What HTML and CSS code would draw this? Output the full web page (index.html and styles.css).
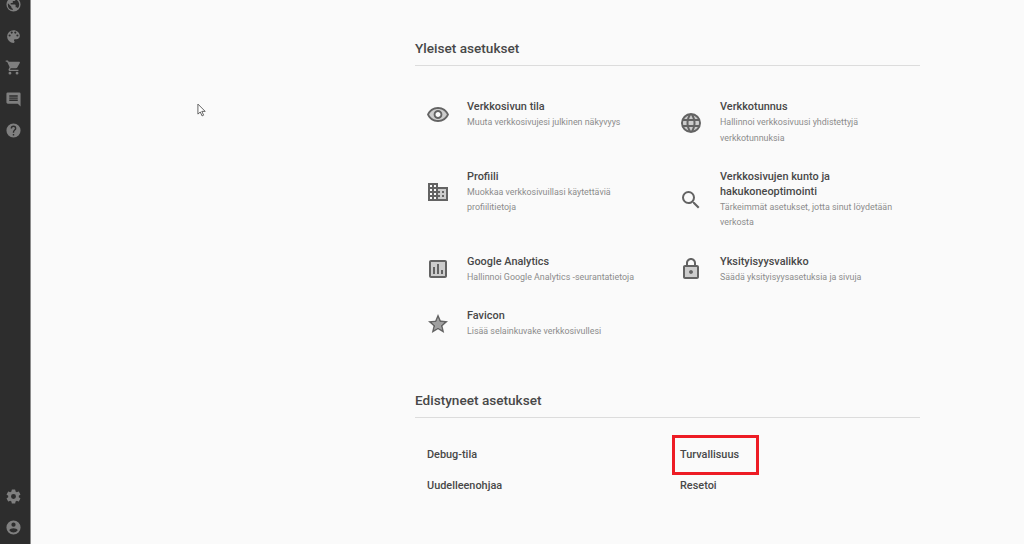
FILE: index.html
```html
<!DOCTYPE html>
<html lang="fi">
<head>
<meta charset="utf-8">
<title>Asetukset</title>
<link rel="stylesheet" href="styles.css">
</head>
<body>
<aside class="rail">
  <div class="rail-group">
    <svg class="rail-icon" viewBox="0 0 24 24"><path d="M12 2a10 10 0 1 0 0 20 10 10 0 0 0 0-20zm-1 17.93A8 8 0 0 1 4 12c0-.62.08-1.21.21-1.79L9 15v1c0 1.1.9 2 2 2v1.93zm6.9-2.54A2 2 0 0 0 16 16h-1v-3c0-.55-.45-1-1-1H8v-2h2c.55 0 1-.45 1-1V7h2c1.1 0 2-.9 2-2v-.41a8 8 0 0 1 2.9 12.8z"/></svg>
    <svg class="rail-icon" viewBox="0 0 24 24"><path d="M12 3a9 9 0 0 0 0 18c.83 0 1.5-.67 1.5-1.5 0-.39-.15-.74-.39-1.01-.23-.26-.38-.61-.38-.99 0-.83.67-1.5 1.5-1.5H16c2.76 0 5-2.24 5-5 0-4.42-4.03-8-9-8zm-5.5 9a1.5 1.5 0 1 1 0-3 1.5 1.5 0 0 1 0 3zm3-4a1.5 1.5 0 1 1 0-3 1.5 1.5 0 0 1 0 3zm5 0a1.5 1.5 0 1 1 0-3 1.5 1.5 0 0 1 0 3zm3 4a1.5 1.5 0 1 1 0-3 1.5 1.5 0 0 1 0 3z"/></svg>
    <svg class="rail-icon" viewBox="0 0 24 24"><path d="M7 18a2 2 0 1 0 0 4 2 2 0 0 0 0-4zM1 2v2h2l3.6 7.59-1.35 2.45c-.16.28-.25.61-.25.96 0 1.1.9 2 2 2h12v-2H7.42a.25.25 0 0 1-.25-.25l.03-.12.9-1.63h7.45c.75 0 1.41-.41 1.75-1.03l3.58-6.49A1 1 0 0 0 20 4H5.21l-.94-2H1zm16 16a2 2 0 1 0 0 4 2 2 0 0 0 0-4z"/></svg>
    <svg class="rail-icon" viewBox="0 0 24 24"><path d="M20 2H4a2 2 0 0 0-2 2v12c0 1.1.9 2 2 2h14l4 4V4a2 2 0 0 0-2-2zm-2 12H6v-2h12v2zm0-3H6V9h12v2zm0-3H6V6h12v2z"/></svg>
    <svg class="rail-icon" viewBox="0 0 24 24"><path d="M12 2a10 10 0 1 0 0 20 10 10 0 0 0 0-20zm1 17h-2v-2h2v2zm2.07-7.75-.9.92C13.45 12.9 13 13.5 13 15h-2v-.5c0-1.1.45-2.1 1.17-2.83l1.24-1.26c.37-.36.59-.86.59-1.41a2 2 0 0 0-4 0H8a4 4 0 0 1 8 0c0 .88-.36 1.68-.93 2.25z"/></svg>
  </div>
  <div class="rail-group">
    <svg class="rail-icon" viewBox="0 0 24 24"><path d="M19.43 12.98c.04-.32.07-.64.07-.98s-.03-.66-.07-.98l2.11-1.65a.5.5 0 0 0 .12-.64l-2-3.46a.5.5 0 0 0-.61-.22l-2.49 1a7.3 7.3 0 0 0-1.69-.98l-.38-2.65A.49.49 0 0 0 14 2h-4a.49.49 0 0 0-.49.42l-.38 2.65c-.61.25-1.17.59-1.69.98l-2.49-1a.5.5 0 0 0-.61.22l-2 3.46a.49.49 0 0 0 .12.64l2.11 1.65c-.04.32-.07.65-.07.98s.03.66.07.98l-2.11 1.65a.5.5 0 0 0-.12.64l2 3.46c.12.22.39.3.61.22l2.49-1c.52.4 1.08.73 1.69.98l.38 2.65c.03.24.24.42.49.42h4c.25 0 .46-.18.49-.42l.38-2.65c.61-.25 1.17-.59 1.69-.98l2.49 1c.23.09.49 0 .61-.22l2-3.46a.5.5 0 0 0-.12-.64l-2.11-1.65zM12 15.5a3.5 3.5 0 1 1 0-7 3.5 3.5 0 0 1 0 7z"/></svg>
    <svg class="rail-icon" viewBox="0 0 24 24"><path d="M12 2a10 10 0 1 0 0 20 10 10 0 0 0 0-20zm0 3a3 3 0 1 1 0 6 3 3 0 0 1 0-6zm0 14.2a7.2 7.2 0 0 1-6-3.22c.03-1.99 4-3.08 6-3.08s5.97 1.09 6 3.08a7.2 7.2 0 0 1-6 3.22z"/></svg>
  </div>
</aside>

<main class="content">
  <section class="general">
    <h2 class="section-title">Yleiset asetukset</h2>
    <div class="settings-grid">
      <a class="item">
        <svg class="item-icon" viewBox="0 0 24 24"><path class="tone" d="M12 6c-3.79 0-7.17 2.13-8.82 5.5C4.83 14.87 8.21 17 12 17s7.17-2.13 8.82-5.5C19.17 8.13 15.79 6 12 6zm0 10c-2.48 0-4.5-2.02-4.5-4.5S9.52 7 12 7s4.5 2.02 4.5 4.5S14.48 16 12 16z"/><path d="M12 4C7 4 2.73 7.11 1 11.5 2.73 15.89 7 19 12 19s9.27-3.11 11-7.5C21.27 7.11 17 4 12 4zm0 13c-3.79 0-7.17-2.13-8.82-5.5C4.83 8.13 8.21 6 12 6s7.17 2.13 8.82 5.5C19.17 14.87 15.79 17 12 17zm0-10c-2.48 0-4.5 2.02-4.5 4.5S9.52 16 12 16s4.5-2.02 4.5-4.5S14.48 7 12 7zm0 7c-1.38 0-2.5-1.12-2.5-2.5S10.62 9 12 9s2.5 1.12 2.5 2.5S13.38 14 12 14z"/></svg>
        <div class="item-text"><h3>Verkkosivun tila</h3><p>Muuta verkkosivujesi julkinen näkyvyys</p></div>
      </a>
      <a class="item">
        <svg class="item-icon" viewBox="0 0 24 24"><circle class="tone" cx="12" cy="12" r="9"/><path d="M11.99 2A10 10 0 1 0 12 22a10 10 0 0 0-.01-20zm6.93 6h-2.95a15.65 15.65 0 0 0-1.38-3.56A8.03 8.03 0 0 1 18.92 8zM12 4.04c.83 1.2 1.48 2.53 1.91 3.96h-3.82c.43-1.43 1.08-2.76 1.91-3.96zM4.26 14A8.26 8.26 0 0 1 4 12c0-.69.1-1.36.26-2h3.38c-.08.66-.14 1.32-.14 2s.06 1.34.14 2H4.26zm.82 2h2.95c.32 1.25.78 2.45 1.38 3.56A7.99 7.99 0 0 1 5.08 16zm2.95-8H5.08a7.99 7.99 0 0 1 4.33-3.56A15.65 15.65 0 0 0 8.03 8zM12 19.96c-.83-1.2-1.48-2.53-1.91-3.96h3.82c-.43 1.43-1.08 2.76-1.91 3.96zM14.34 14H9.66c-.09-.66-.16-1.32-.16-2s.07-1.35.16-2h4.68c.09.65.16 1.32.16 2s-.07 1.34-.16 2zm.25 5.56c.6-1.11 1.06-2.31 1.38-3.56h2.95a8.03 8.03 0 0 1-4.33 3.56zM16.36 14c.08-.66.14-1.32.14-2s-.06-1.34-.14-2h3.38c.16.64.26 1.31.26 2s-.1 1.36-.26 2h-3.38z"/></svg>
        <div class="item-text"><h3>Verkkotunnus</h3><p>Hallinnoi verkkosivuusi yhdistettyjä verkkotunnuksia</p></div>
      </a>
      <a class="item">
        <svg class="item-icon" viewBox="0 0 24 24"><path class="tone" d="M12 11h2v2h-2v2h2v2h-2v2h8V9h-8v2zm4 0h2v2h-2v-2zm0 4h2v2h-2v-2z"/><path d="M12 7V3H2v18h20V7H12zM6 19H4v-2h2v2zm0-4H4v-2h2v2zm0-4H4V9h2v2zm0-4H4V5h2v2zm4 12H8v-2h2v2zm0-4H8v-2h2v2zm0-4H8V9h2v2zm0-4H8V5h2v2zm10 12h-8v-2h2v-2h-2v-2h2v-2h-2V9h8v10zm-2-8h-2v2h2v-2zm0 4h-2v2h2v-2z"/></svg>
        <div class="item-text"><h3>Profiili</h3><p>Muokkaa verkkosivuillasi käytettäviä profiilitietoja</p></div>
      </a>
      <a class="item">
        <svg class="item-icon" viewBox="0 0 24 24"><path d="M15.5 14h-.79l-.28-.27A6.47 6.47 0 0 0 16 9.5 6.5 6.5 0 1 0 9.5 16c1.61 0 3.09-.59 4.23-1.57l.27.28v.79l5 4.99L20.49 19l-4.99-5zm-6 0a4.5 4.5 0 1 1 0-9 4.5 4.5 0 0 1 0 9z"/></svg>
        <div class="item-text"><h3>Verkkosivujen kunto ja hakukoneoptimointi</h3><p>Tärkeimmät asetukset, jotta sinut löydetään verkosta</p></div>
      </a>
      <a class="item">
        <svg class="item-icon" viewBox="0 0 24 24"><path class="tone" d="M5 5v14h14V5H5zm4 12H7v-7h2v7zm4 0h-2V7h2v10zm4 0h-2v-4h2v4z"/><path d="M3 5v14c0 1.1.9 2 2 2h14c1.1 0 2-.9 2-2V5c0-1.1-.9-2-2-2H5c-1.1 0-2 .9-2 2zm2 0h14v14H5V5zm2 5h2v7H7zm4-3h2v10h-2zm4 6h2v4h-2z"/></svg>
        <div class="item-text"><h3>Google Analytics</h3><p>Hallinnoi Google Analytics -seurantatietoja</p></div>
      </a>
      <a class="item">
        <svg class="item-icon" viewBox="0 0 24 24"><path class="tone" d="M6 20h12V10H6v10zm6-7c1.1 0 2 .9 2 2s-.9 2-2 2-2-.9-2-2 .9-2 2-2z"/><path d="M18 8h-1V6c0-2.76-2.24-5-5-5S7 3.24 7 6v2H6c-1.1 0-2 .9-2 2v10c0 1.1.9 2 2 2h12c1.1 0 2-.9 2-2V10c0-1.1-.9-2-2-2zM9 6c0-1.66 1.34-3 3-3s3 1.34 3 3v2H9V6zm9 14H6V10h12v10zm-6-3c1.1 0 2-.9 2-2s-.9-2-2-2-2 .9-2 2 .9 2 2 2z"/></svg>
        <div class="item-text"><h3>Yksityisyysvalikko</h3><p>Säädä yksityisyysasetuksia ja sivuja</p></div>
      </a>
      <a class="item">
        <svg class="item-icon" viewBox="0 0 24 24"><path class="tone-strong" d="M12 15.4l-3.76 2.27 1-4.28-3.32-2.88 4.38-.38L12 6.1l1.71 4.04 4.38.38-3.32 2.88 1 4.28L12 15.4z"/><path d="M22 9.24l-7.19-.62L12 2 9.19 8.63 2 9.24l5.46 4.73L5.82 21 12 17.27 18.18 21l-1.63-7.03L22 9.24zM12 15.4l-3.76 2.27 1-4.28-3.32-2.88 4.38-.38L12 6.1l1.71 4.04 4.38.38-3.32 2.88 1 4.28L12 15.4z"/></svg>
        <div class="item-text"><h3>Favicon</h3><p>Lisää selainkuvake verkkosivullesi</p></div>
      </a>
    </div>
  </section>

  <section class="advanced">
    <h2 class="section-title">Edistyneet asetukset</h2>
    <div class="links-grid">
      <a class="link">Debug-tila</a>
      <a class="link marked">Turvallisuus</a>
      <a class="link">Uudelleenohjaa</a>
      <a class="link">Resetoi</a>
    </div>
  </section>
</main>

<svg class="cursor" viewBox="0 0 11 15"><path d="M1 1v11l2.6-2.3L5.6 14l1.7-.8-2-4.2H9z"/></svg>
</body>
</html>
```
FILE: styles.css
```css
*, *::after { box-sizing: border-box; }
html, body { height: 100%; }
body {
  margin: 0;
  height: 544px;
  overflow: hidden;
  display: flex;
  background: #fafafa;
  font-family: Roboto, "Liberation Sans", sans-serif;
  color: #484848;
}
.rail {
  width: 31px;
  flex: none;
  background: #2d2d2d;
  border-right: 1px solid #8c8c8c;
  display: flex;
  flex-direction: column;
  justify-content: space-between;
  padding: 0 4px 8px 0;
}
.rail-group {
  display: flex;
  flex-direction: column;
  align-items: center;
  gap: 14.5px;
}
.rail-group:first-child { margin-top: -4px; }
.rail-icon { width: 17px; height: 17px; fill: #7f7f7f; display: block; }

.content {
  margin-left: 384px;
  width: 505px;
  flex: none;
  padding-top: 40px;
}
.section-title {
  margin: 0;
  font-size: 13.6px;
  line-height: 17px;
  font-weight: 500;
  color: #484848;
  padding-bottom: 8px;
  border-bottom: 1px solid #dcdcdc;
}
.settings-grid {
  display: grid;
  grid-template-columns: 253px 252px;
  row-gap: 22.8px;
  padding-top: 33px;
}
.item {
  display: flex;
  align-items: center;
  align-self: start;
  padding-left: 11px;
}
.item-icon { width: 24px; height: 24px; fill: #636363; flex: none; }
.tone { opacity: .3; }
.tone-strong { opacity: .6; }
.item-text { margin-left: 17px; max-width: 190px; }
.item-text h3 {
  margin: 0;
  font-size: 10.9px;
  line-height: 15px;
  font-weight: 500;
  color: #484848;
}
.item-text p {
  margin: 1px 0 0;
  font-size: 8.9px;
  line-height: 15.5px;
  color: #8c8c8c;
}
.advanced { margin-top: 52.6px; }
.links-grid {
  display: grid;
  grid-template-columns: 253px 252px;
  row-gap: 16px;
  padding: 29px 0 0 12px;
}
.link {
  font-size: 10.9px;
  line-height: 15px;
  font-weight: 500;
  color: #484848;
  position: relative;
}
.marked::after {
  content: "";
  position: absolute;
  left: -8px;
  top: -12px;
  width: 87px;
  height: 40px;
  border: 3px solid #ed1c24;
}
.cursor {
  position: absolute;
  left: 197px;
  top: 103px;
  width: 10px;
  height: 14px;
  fill: #fff;
  stroke: #555;
  stroke-width: 1;
}
```
